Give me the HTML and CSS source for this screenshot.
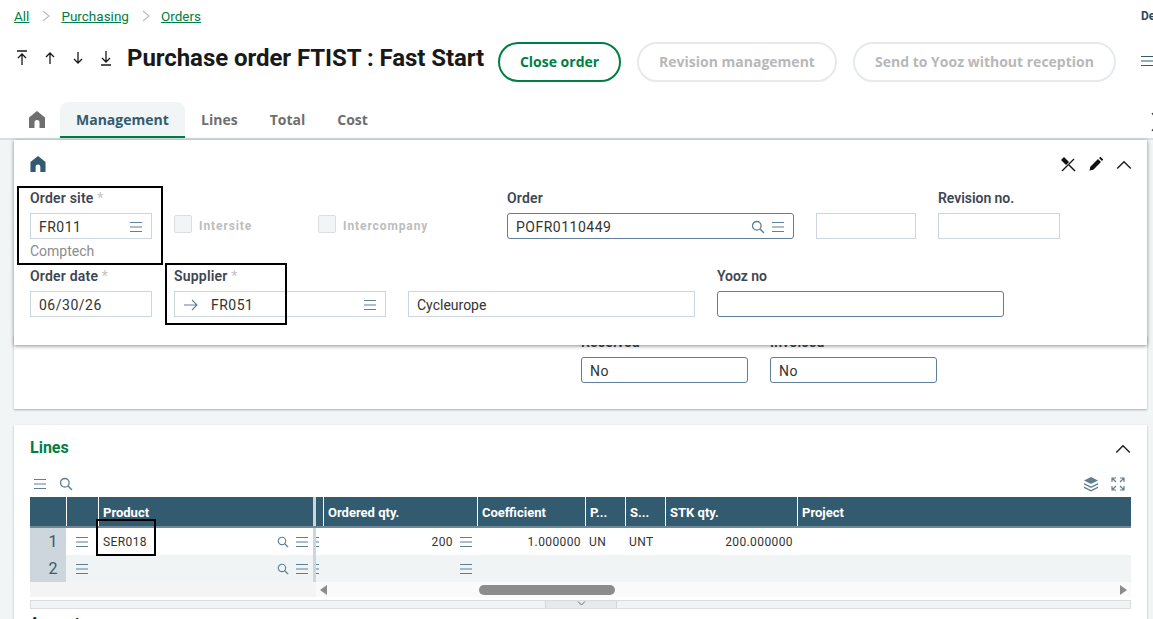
FILE: index.html
```html
<!DOCTYPE html>
<html lang="en">
	<head>
		<meta charset="UTF-8">
		<meta name="viewport" content="width=device-width, initial-scale=1.0">
		<title>Purchase order</title>
		<link rel="stylesheet" href="styles.css">
	</head>
	<body>
		<svg class="icon-defs" width="0" height="0">
			<symbol id="i-menu" viewBox="0 0 14 12"><path d="M1 1.5h12M1 6h12M1 10.500h12" fill="none" stroke="currentColor" stroke-width="1.200"/></symbol>
			<symbol id="i-dash" viewBox="0 0 3 12"><path d="M0 1.5h3M0 6h3M0 10.500h3" fill="none" stroke="currentColor" stroke-width="1.200"/></symbol>
			<symbol id="i-search" viewBox="0 0 14 14"><circle cx="5.800" cy="5.800" r="4.300" fill="none" stroke="currentColor" stroke-width="1.300"/><path d="M9 9l4 4" stroke="currentColor" stroke-width="1.500"/></symbol>
			<symbol id="i-home" viewBox="0 0 16 17"><path d="M8 0L16 6.500V17H10.500V11.500Q10.500 9 8 9T5.500 11.500V17H0V6.500Z" fill="currentColor"/></symbol>
			<symbol id="i-chevron-up" viewBox="0 0 14 8"><path d="M1 7.500L7 1.500l6 6" fill="none" stroke="currentColor" stroke-width="1.300"/></symbol>
		</svg>

		<div class="top">
			<div class="breadcrumb">
				<a>All</a>
				<svg class="crumb-sep" width="8" height="12" viewBox="0 0 8 12"><path d="M1 1l6 5-6 5" fill="none" stroke="#bdbdbd" stroke-width="1.200"/></svg>
				<a>Purchasing</a>
				<svg class="crumb-sep" width="8" height="12" viewBox="0 0 8 12"><path d="M1 1l6 5-6 5" fill="none" stroke="#bdbdbd" stroke-width="1.200"/></svg>
				<a>Orders</a>
				<span class="user-name">De</span>
			</div>

			<div class="title-row">
				<div class="nav-arrows">
					<svg width="12" height="16" viewBox="0 0 12 16"><path d="M1 1h10M6 15V4M2 8l4-4 4 4" fill="none" stroke="#1a1a1a" stroke-width="1.300"/></svg>
					<svg width="12" height="16" viewBox="0 0 12 16"><path d="M6 14V3M2 7l4-4 4 4" fill="none" stroke="#1a1a1a" stroke-width="1.300"/></svg>
					<svg width="12" height="16" viewBox="0 0 12 16"><path d="M6 2v11M2 9l4 4 4-4" fill="none" stroke="#1a1a1a" stroke-width="1.300"/></svg>
					<svg width="12" height="16" viewBox="0 0 12 16"><path d="M1 15h10M6 1v11M2 8l4 4 4-4" fill="none" stroke="#1a1a1a" stroke-width="1.300"/></svg>
				</div>
				<h1>Purchase order FTIST : Fast Start</h1>
				<button class="btn btn-primary">Close order</button>
				<button class="btn btn-revision" disabled>Revision management</button>
				<button class="btn btn-yooz" disabled>Send to Yooz without reception</button>
				<svg class="top-menu" width="14" height="12"><use href="#i-menu"/></svg>
			</div>

			<div class="tabs">
				<svg class="tab-home" width="16" height="17"><use href="#i-home"/></svg>
				<div class="tab active">Management</div>
				<div class="tab">Lines</div>
				<div class="tab">Total</div>
				<div class="tab">Cost</div>
				<svg class="tab-more" width="8" height="20" viewBox="0 0 8 20"><path d="M1 1l6 9-6 9" fill="none" stroke="#333" stroke-width="1.200"/></svg>
			</div>
		</div>

		<div class="content">
			<div class="panel">
				<div class="panel-head">
					<svg class="panel-home" width="16" height="16"><use href="#i-home"/></svg>
					<div class="panel-tools">
						<svg width="16" height="16" viewBox="0 0 16 16"><path d="M2 15L14 3" stroke="#111" stroke-width="1.200"/><path d="M1 4l3-3 5 5-3 3z" fill="#111"/><path d="M9 9l6 6" stroke="#111" stroke-width="1.400"/></svg>
						<svg width="16" height="16" viewBox="0 0 16 16"><path d="M1.500 14.500l.8-3.800 7.700-7.700 3 3-7.700 7.700zM11 2l1.500-1.200 2.700 2.700L14 5z" fill="#111"/></svg>
						<svg width="16" height="9" class="chevron"><use href="#i-chevron-up"/></svg>
					</div>
				</div>

				<div class="form-row row-one">
					<div class="field site">
						<label>Order site <span class="req">*</span></label>
						<div class="box">FR011<svg class="box-icon" width="14" height="12"><use href="#i-menu"/></svg></div>
						<div class="hint">Comptech</div>
						<div class="mark mark-site"></div>
					</div>
					<div class="check check-intersite"><span class="check-box"></span>Intersite</div>
					<div class="check check-intercompany"><span class="check-box"></span>Intercompany</div>
					<div class="field order">
						<label>Order</label>
						<div class="box box-active">POFR0110449
							<svg class="box-icon search" width="14" height="14"><use href="#i-search"/></svg>
							<svg class="box-icon" width="14" height="12"><use href="#i-menu"/></svg>
						</div>
					</div>
					<div class="field blank"><label>&nbsp;</label><div class="box"></div></div>
					<div class="field revision"><label>Revision no.</label><div class="box"></div></div>
				</div>

				<div class="form-row row-two">
					<div class="field date">
						<label>Order date <span class="req">*</span></label>
						<div class="box">06/30/26</div>
					</div>
					<div class="field supplier">
						<label>Supplier <span class="req">*</span></label>
						<div class="box">
							<svg class="arrow" width="16" height="12" viewBox="0 0 16 12"><path d="M1 6h13M9 1l5 5-5 5" fill="none" stroke="#5f7f9a" stroke-width="1.100"/></svg>
							FR051
							<svg class="box-icon" width="14" height="12"><use href="#i-menu"/></svg>
						</div>
						<div class="mark mark-supplier"></div>
					</div>
					<div class="field name"><label>&nbsp;</label><div class="box">Cycleurope</div></div>
					<div class="field yooz"><label>Yooz no</label><div class="box box-active"></div></div>
				</div>
			</div>

			<div class="card status-card">
				<div class="field status"><label>Received</label><div class="box box-active">No</div></div>
				<div class="field status"><label>Invoiced</label><div class="box box-active">No</div></div>
			</div>

			<div class="card lines-card">
				<div class="lines-head">
					<h2>Lines</h2>
					<svg width="16" height="9" class="chevron"><use href="#i-chevron-up"/></svg>
				</div>
				<div class="grid-tools">
					<svg width="14" height="12"><use href="#i-menu"/></svg>
					<svg width="14" height="14"><use href="#i-search"/></svg>
					<span class="grow"></span>
					<svg width="16" height="16" viewBox="0 0 16 16"><path d="M8 1l7 3.500-7 3.500-7-3.500z" fill="#5f7f8f"/><path d="M1 7l7 3.500L15 7v1.500L8 12 1 8.500z" fill="#5f7f8f"/><path d="M1 10.500L8 14l7-3.500V12l-7 3.500L1 12z" fill="#5f7f8f"/></svg>
					<svg width="14" height="14" viewBox="0 0 14 14"><path d="M1 5V1h4M9 1h4v4M13 9v4H9M5 13H1V9M1 1l4 4M13 1L9 5M13 13L9 9M1 13l4-4" fill="none" stroke="#5f7f8f" stroke-width="1.200"/></svg>
				</div>

				<div class="grid">
					<div class="grid-row grid-header">
						<div class="corner"></div>
						<div class="col"></div>
						<div class="col">Product</div>
						<div class="sep"></div>
						<div></div>
						<div class="col">Ordered qty.</div>
						<div class="col">Coefficient</div>
						<div class="col">P...</div>
						<div class="col">S...</div>
						<div class="col">STK qty.</div>
						<div class="col">Project</div>
					</div>
					<div class="grid-row">
						<div class="num">1</div>
						<div class="cell cell-menu"><svg width="14" height="12"><use href="#i-menu"/></svg></div>
						<div class="cell cell-product">SER018
							<svg class="cell-search" width="12" height="12"><use href="#i-search"/></svg>
							<svg width="14" height="12"><use href="#i-menu"/></svg>
							<div class="mark mark-product"></div>
						</div>
						<div class="sep"></div>
						<div class="cell dots"><svg width="3" height="12"><use href="#i-dash"/></svg></div>
						<div class="cell right">200<svg width="14" height="12"><use href="#i-menu"/></svg></div>
						<div class="cell right">1.000000</div>
						<div class="cell">UN</div>
						<div class="cell">UNT</div>
						<div class="cell right">200.000000</div>
						<div class="cell"></div>
					</div>
					<div class="grid-row row-alt">
						<div class="num">2</div>
						<div class="cell cell-menu"><svg width="14" height="12"><use href="#i-menu"/></svg></div>
						<div class="cell cell-product">
							<svg class="cell-search" width="12" height="12"><use href="#i-search"/></svg>
							<svg width="14" height="12"><use href="#i-menu"/></svg>
						</div>
						<div class="sep"></div>
						<div class="cell dots"><svg width="3" height="12"><use href="#i-dash"/></svg></div>
						<div class="cell right"><svg width="14" height="12"><use href="#i-menu"/></svg></div>
						<div class="cell"></div>
						<div class="cell"></div>
						<div class="cell"></div>
						<div class="cell"></div>
						<div class="cell"></div>
					</div>
					<div class="grid-scroll">
						<div class="scroll-frozen"></div>
						<div class="scroll-track">
							<span class="arrow-left"></span>
							<span class="scroll-thumb"></span>
							<span class="arrow-right"></span>
						</div>
					</div>
				</div>

				<div class="grid-pull">
					<div class="pull-handle">
						<svg width="9" height="5" viewBox="0 0 9 5"><path d="M1 .5l3.500 3.500L8 .5" fill="none" stroke="#667" stroke-width="1"/></svg>
					</div>
				</div>
				<div class="amount">Amount</div>
			</div>
		</div>
	</body>
</html>
```

FILE: styles.css
```css
* {
    margin: 0;
    padding: 0;
    box-sizing: border-box;
}

html, body {
    width: 1153px;
    height: 619px;
    overflow: hidden;
}

body {
    font-family: 'Roboto', 'Liberation Sans', sans-serif;
    background: #f2f5f6;
    color: #333;
}

.icon-defs {
    position: absolute;
}

svg {
    display: block;
    flex-shrink: 0;
}

.top {
    background: white;
    height: 140px;
    border-bottom: 2px solid #d9e0e4;
    overflow: hidden;
}

/* Breadcrumb */
.breadcrumb {
    height: 34px;
    padding: 0 0 2px 14px;
    display: flex;
    align-items: center;
    font-size: 13.5px;
}

.breadcrumb a {
    color: #007e45;
    text-decoration: underline;
}

.crumb-sep {
    margin: 0 11px 0 13px;
}

.user-name {
    margin-left: auto;
    width: 12px;
    overflow: hidden;
    font-size: 12px;
    font-weight: 700;
    color: #2b4a5c;
}

/* Title row */
.title-row {
    height: 48px;
    display: flex;
    align-items: center;
}

.nav-arrows {
    width: 127px;
    flex-shrink: 0;
    padding-left: 16px;
    display: flex;
    gap: 16px;
}

h1 {
    width: 371px;
    flex-shrink: 0;
    font-size: 24px;
    font-weight: 700;
    letter-spacing: -0.06px;
    color: #191919;
    white-space: nowrap;
}

.btn {
    height: 40px;
    margin: 8px 16px 0 0;
    padding-bottom: 2px;
    border-radius: 20px;
    background: white;
    font-family: 'Open Sans', sans-serif;
    font-size: 14px;
    font-weight: 700;
    flex-shrink: 0;
}

.btn-primary {
    width: 123px;
    border: 2px solid #007e45;
    color: #007e45;
}

.btn-revision {
    width: 200px;
    border: 2px solid #e6eaed;
    color: #b8b8b8;
}

.btn-yooz {
    width: 263px;
    border: 2px solid #e6eaed;
    color: #b8b8b8;
}

.top-menu {
    margin: 6px 0 0 8px;
    color: #335b70;
}

/* Tabs */
.tabs {
    height: 36px;
    margin-top: 20px;
    display: flex;
    align-items: stretch;
    position: relative;
    font-family: 'Open Sans', sans-serif;
    font-size: 14px;
    font-weight: 700;
    color: #6f6f6f;
}

.tab-home {
    margin: 9px 15px 0 29px;
    color: #6f6f6f;
}

.tab {
    padding: 8px 16px 0;
}

.tab.active {
    width: 125px;
    background: #f2f5f6;
    border-bottom: 2px solid #007e45;
    border-radius: 8px 8px 0 0;
    color: #335b70;
}

.tab-more {
    position: absolute;
    left: 1151px;
    top: 10px;
}

/* Content */
.content {
    padding: 0 6px 0 14px;
}

.panel {
    position: relative;
    z-index: 2;
    height: 205px;
    background: white;
    box-shadow: 0 1px 4px rgba(0, 0, 0, 0.45);
    padding: 0 16px;
}

.panel-head {
    height: 49px;
    padding-top: 16px;
    display: flex;
    align-items: flex-start;
    justify-content: space-between;
}

.panel-home {
    color: #335b70;
}

.panel-tools {
    height: 16px;
    display: flex;
    align-items: center;
    gap: 12px;
    margin-right: -1px;
}

.chevron {
    color: #222;
}

.form-row {
    display: flex;
    position: relative;
}

.row-one {
    height: 78px;
}

.row-two {
    height: 60px;
}

.field {
    position: relative;
}

.field label {
    display: block;
    height: 24px;
    font-size: 14px;
    font-weight: 600;
    line-height: 18px;
    letter-spacing: 0.2px;
    color: #3f4653;
    white-space: nowrap;
}

.revision label,
.yooz label {
    letter-spacing: -0.05px;
}

.req {
    color: #c4c4c4;
    font-weight: 400;
}

.box {
    height: 26px;
    border: 1px solid #ccd6de;
    padding: 1px 8px 0;
    display: flex;
    align-items: center;
    font-size: 14px;
    letter-spacing: 0.5px;
    color: #333;
}

.box-active {
    border-color: #5f7f9a;
    border-radius: 3px;
}

.box-icon {
    color: #5f7f9a;
    margin-left: auto;
}

.box-icon.search + .box-icon {
    margin-left: 6px;
}

.hint {
    font-size: 14px;
    color: #8c8c8c;
    line-height: 24px;
}

.site { width: 122px; margin-right: 22px; }
.date { width: 122px; margin-right: 22px; }
.order { width: 287px; margin-right: 22px; }
.blank { width: 100px; margin-right: 22px; }
.revision { width: 122px; }
.supplier { width: 212px; margin-right: 22px; }
.name { width: 287px; margin-right: 22px; }
.yooz { width: 287px; }

.name .box {
    letter-spacing: 0;
}

.supplier .arrow {
    margin-right: 12px;
}

.check {
    height: 18px;
    margin-top: 26px;
    display: flex;
    align-items: flex-end;
    gap: 7px;
    font-size: 12px;
    font-weight: 700;
    letter-spacing: 0.9px;
    color: #bdbdbd;
}

.check-box {
    width: 18px;
    height: 18px;
    background: #f2f5f6;
    border: 1px solid #d9dfe3;
    border-radius: 2px;
}

.check-intersite { width: 144px; }
.check-intercompany { width: 189px; }

/* Black annotation frames drawn over the screenshot */
.mark {
    position: absolute;
    border: 2px solid black;
    pointer-events: none;
}

.mark-site {
    left: -13px;
    top: -3px;
    width: 146px;
    height: 79px;
}

.mark-supplier {
    left: -9px;
    top: -4px;
    width: 122px;
    height: 62px;
}

.mark-product {
    left: -2px;
    top: -9px;
    width: 60px;
    height: 37px;
}

/* Cards */
.card {
    background: white;
    box-shadow: 0 1px 2px rgba(0, 0, 0, 0.3);
    padding: 0 16px;
}

.status-card {
    height: 74px;
    margin-top: -10px;
    margin-bottom: 16px;
    padding-left: 567px;
    display: flex;
    gap: 22px;
}

.status {
    width: 167px;
}

.status label {
    height: 22px;
    line-height: 14px;
}

.lines-card {
    height: 200px;
    overflow: hidden;
}

.lines-head {
    height: 46px;
    display: flex;
    align-items: center;
    justify-content: space-between;
}

.lines-head h2 {
    margin-top: -2px;
    font-size: 16px;
    font-weight: 700;
    color: #007e45;
}

.grid-tools {
    height: 26px;
    padding: 0 6px 0 3px;
    display: flex;
    align-items: center;
    gap: 12px;
    color: #5f7f8f;
}

.grow {
    flex: 1;
}

/* Lines grid */
.grid-row {
    display: grid;
    grid-template-columns: 36px 32px 215px 3px 7px 154px 108px 40px 40px 132px 1fr;
    height: 27px;
    background: white;
    font-size: 12px;
    letter-spacing: 0.4px;
}

.grid-header {
    height: 31px;
    background: #335b70;
    border-bottom: 2px solid #6d8a9a;
    color: white;
    font-size: 13px;
    font-weight: 700;
    letter-spacing: 0;
}

.corner {
    border-top-left-radius: 8px;
    background: #335b70;
}

.col {
    border-left: 1px solid white;
    padding: 8px 0 0 4px;
    white-space: nowrap;
}

.sep {
    background: #ccd6de;
}

.row-alt {
    background: #f0f4f5;
}

.num {
    background: #cdd6dc;
    color: #335b70;
    font-size: 16px;
    text-align: right;
    padding: 4px 8px 0 0;
}

.cell {
    display: flex;
    align-items: center;
    padding: 0 4px;
    color: #333;
    min-width: 0;
}

.cell svg {
    color: #5f7f8f;
}

.right {
    justify-content: flex-end;
    gap: 6px;
}

.cell-menu {
    padding: 0 0 0 9px;
}

.cell-product {
    position: relative;
    padding: 0 4px 0 5px;
    font-size: 12px;
}

.cell-search {
    margin-left: auto;
    margin-right: 6px;
}

.dots {
    padding: 0;
}

.grid-scroll {
    display: flex;
    height: 15px;
}

.scroll-frozen {
    width: 286px;
    background: #f4f4f4;
}

.scroll-track {
    flex: 1;
    background: #fafafa;
    display: flex;
    align-items: center;
    padding: 0 4px;
}

.arrow-left {
    border: 5px solid transparent;
    border-left: 0;
    border-right: 7px solid #8c8c8c;
}

.arrow-right {
    margin-left: auto;
    border: 5px solid transparent;
    border-right: 0;
    border-left: 7px solid #8c8c8c;
}

.scroll-thumb {
    width: 136px;
    height: 10px;
    margin-left: 152px;
    background: #8c8c8c;
    border-radius: 5px;
}

.grid-pull {
    height: 9px;
    margin-top: 3px;
    background: #f0f4f5;
    border: 1px solid #dcdcdc;
    padding-left: 514px;
}

.pull-handle {
    width: 72px;
    height: 7px;
    background: #e6eaed;
    border-left: 1px solid #d4d4d4;
    border-right: 1px solid #d4d4d4;
    display: flex;
    justify-content: center;
}

.amount {
    margin-top: 6px;
    font-size: 14px;
    font-weight: 700;
    color: #222;
}
```
